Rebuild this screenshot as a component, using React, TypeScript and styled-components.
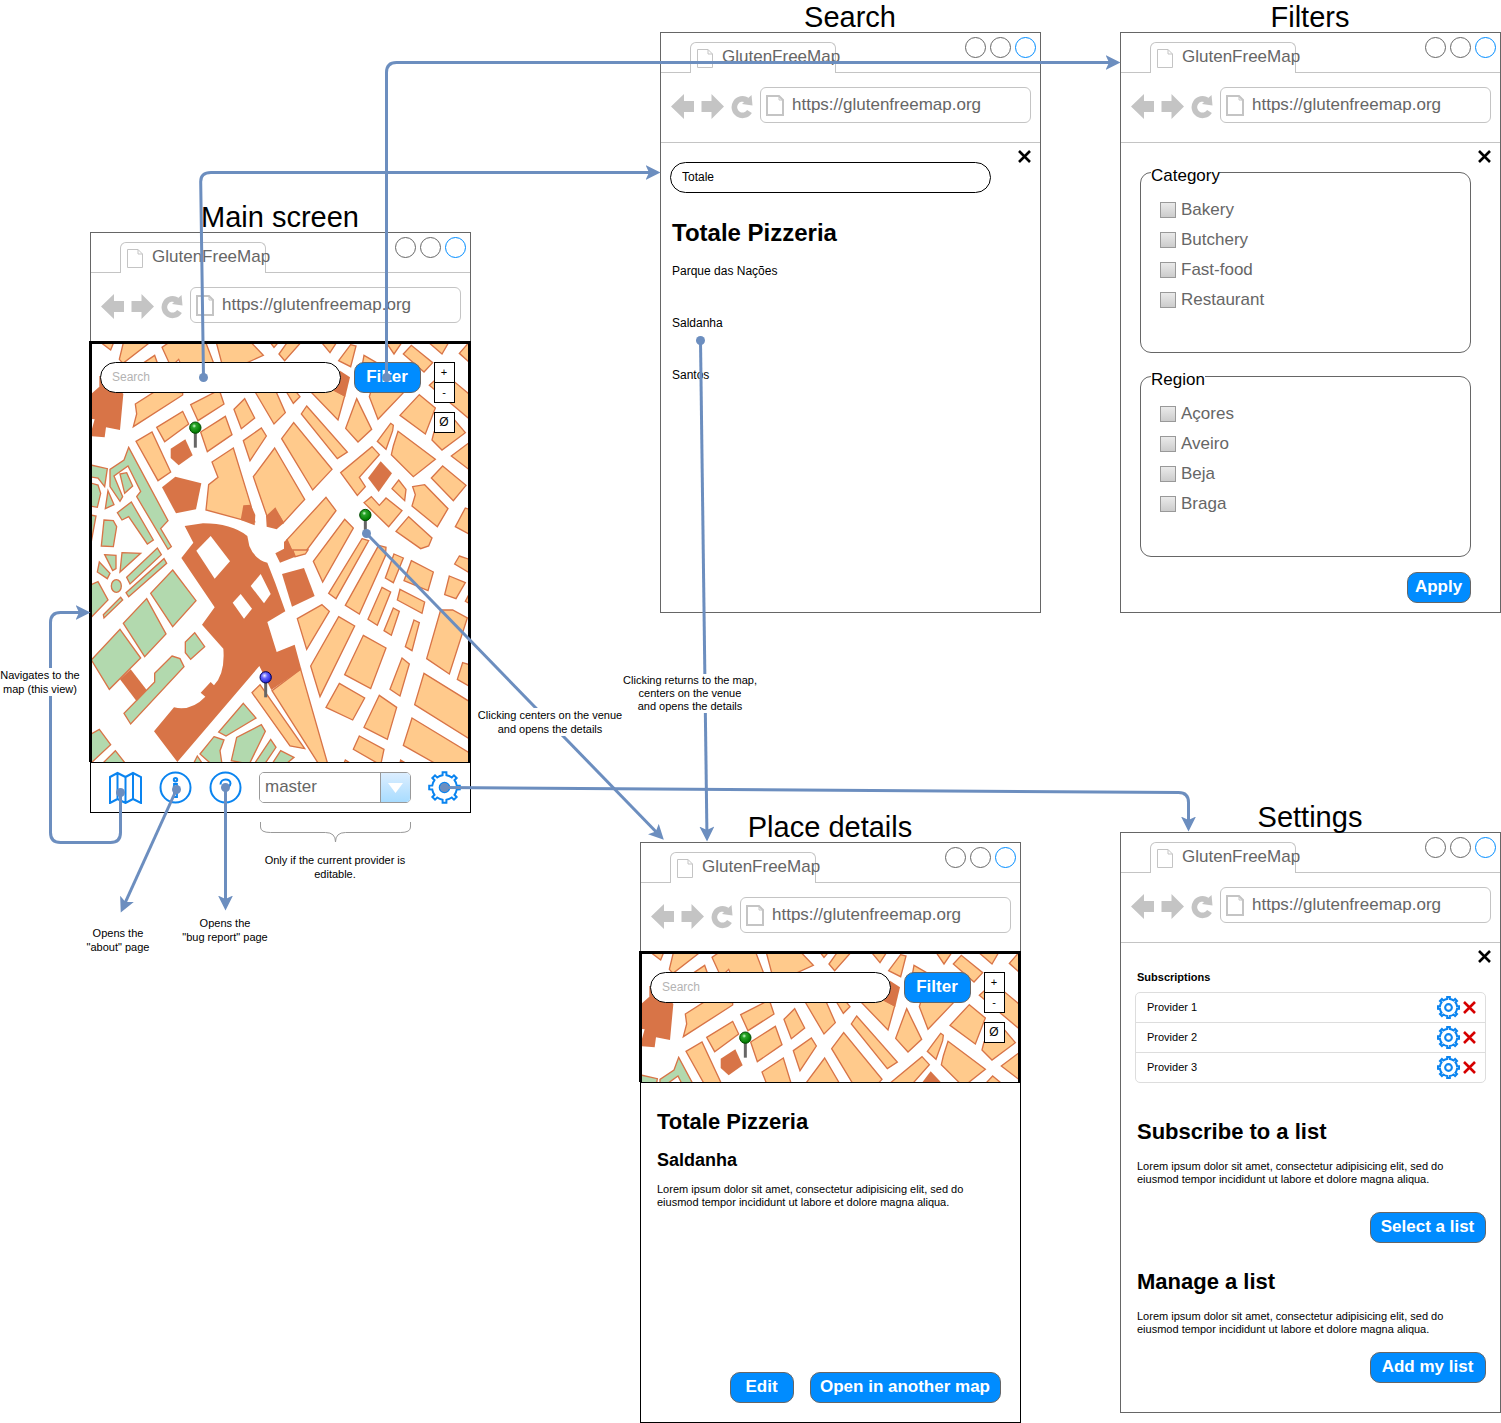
import React from "react";
import styled, { createGlobalStyle } from "styled-components";

const Global = createGlobalStyle`
  *, *::before, *::after { box-sizing: border-box; }
  body { margin: 0; background: #fff; color: #000; font-family: "Liberation Sans", Arial, sans-serif; }
  button, input, select { font-family: inherit; margin: 0; }
  h1, h2, h3, h4, p, ul { margin: 0; padding: 0; }
  ul { list-style: none; }
`;

const BLUE = "#008cff";
const ICON_BLUE = "#0a84f0";
const GREY = "#666";
const LIGHT = "#c4c4c4";
const EDGE = "#6c8ebf";

/* ---------- canvas ---------- */

const Canvas = styled.main`
  position: relative;
  min-height: 1423px;
  overflow: hidden;
`;

const Frame = styled.section<{ $x: number; $y: number }>`
  position: absolute;
  left: ${(p) => p.$x}px;
  top: ${(p) => p.$y}px;
  width: 381px;
`;

const FrameTitle = styled.h1`
  padding-right: 1px;
  font-size: 29px;
  line-height: 30px;
  font-weight: 400;
  text-align: center;
`;

const Window = styled.div`
  display: flex;
  flex-direction: column;
  min-height: 581px;
  border: 1px solid ${GREY};
`;

/* ---------- browser chrome ---------- */

const TabBar = styled.div`
  display: flex;
  justify-content: space-between;
  height: 40px;
  padding: 0 4px 0 29px;
  box-shadow: inset 0 -1px 0 ${LIGHT};
`;

const Tab = styled.div`
  display: flex;
  align-items: flex-start;
  gap: 9px;
  width: 146px;
  height: 31px;
  margin-top: 9px;
  padding: 6px 0 0 6px;
  border: 1px solid ${LIGHT};
  border-bottom: 0;
  border-radius: 6px 6px 0 0;
  background: #fff;
  color: ${GREY};
  font-size: 17px;
  line-height: 18px;
  white-space: nowrap;
`;

const TabText = styled.span`
  margin-top: -1px;
`;

const DocSvg = styled.svg`
  flex: none;
`;

const Dots = styled.div`
  display: flex;
  gap: 4px;
  padding-top: 4px;
`;

const Dot = styled.span<{ $active?: boolean }>`
  width: 21px;
  height: 21px;
  border: 1px solid ${(p) => (p.$active ? BLUE : GREY)};
  border-radius: 50%;
`;

const Toolbar = styled.div`
  display: flex;
  align-items: flex-start;
  height: 69px;
  padding: 14px 9px 0 10px;
`;

const NavButtons = styled.div`
  display: flex;
  gap: 6px;
  width: 89px;
  padding-top: 7px;
`;

const IconButton = styled.button`
  display: block;
  flex: none;
  padding: 0;
  border: 0;
  background: none;
  line-height: 0;
  cursor: pointer;
`;

const Address = styled.div`
  display: flex;
  flex: 1;
  align-items: center;
  gap: 8px;
  height: 36px;
  padding-left: 5px;
  border: 1px solid ${LIGHT};
  border-radius: 6px;
`;

const AddressInput = styled.input`
  flex: 1;
  min-width: 0;
  height: 34px;
  padding: 0;
  border: 0;
  outline: 0;
  background: none;
  color: ${GREY};
  font-size: 17px;
`;

const Body = styled.div`
  position: relative;
  flex: 1;
  border-top: 1px solid ${LIGHT};
`;

const CloseButton = styled(IconButton)`
  position: absolute;
  top: 7px;
  right: 9px;
`;

const DocIcon = ({ w, h, s }: { w: number; h: number; s: number }) => (
  <DocSvg width={w} height={h} viewBox={`0 0 ${w} ${h}`} fill="none" stroke={LIGHT} strokeWidth={s} aria-hidden="true">
    <path d={`M${s / 2} ${s / 2}H${w - 5}L${w - s / 2} 5V${h - s / 2}H${s / 2}Z`} />
    <path d={`M${w - 5} ${s / 2}V5H${w - s / 2}`} strokeWidth="1" />
  </DocSvg>
);

const Chrome = () => (
  <>
    <TabBar>
      <Tab>
        <DocIcon w={16} h={19} s={1} />
        <TabText>GlutenFreeMap</TabText>
      </Tab>
      <Dots>
        <Dot />
        <Dot />
        <Dot $active />
      </Dots>
    </TabBar>
    <Toolbar>
      <NavButtons>
        <IconButton aria-label="Back">
          <svg width="24" height="25" viewBox="0 0 24 25" fill={LIGHT}>
            <path d="M0 12.500 13 0V7H23V18H13V25Z" />
          </svg>
        </IconButton>
        <IconButton aria-label="Forward">
          <svg width="24" height="25" viewBox="0 0 24 25" fill={LIGHT}>
            <path d="M23 12.500 10.500 0V7H0.500V18H10.500V25Z" />
          </svg>
        </IconButton>
        <IconButton aria-label="Reload">
          <svg width="22" height="25" viewBox="0 0 22 25" fill="none">
            <path d="M18.500 17.500A8.200 8.200 0 1 1 16 6.200" stroke={LIGHT} strokeWidth="5.600" />
            <path d="M20.500 1 21.500 11.500 11 10Z" fill={LIGHT} />
          </svg>
        </IconButton>
      </NavButtons>
      <Address>
        <DocIcon w={18} h={21} s={2} />
        <AddressInput aria-label="Address" defaultValue="https://glutenfreemap.org" />
      </Address>
    </Toolbar>
  </>
);

const Screen = ({ x, y, title, children }: { x: number; y: number; title: string; children: React.ReactNode }) => (
  <Frame $x={x} $y={y}>
    <FrameTitle>{title}</FrameTitle>
    <Window>
      <Chrome />
      {children}
    </Window>
  </Frame>
);

/* ---------- shared controls ---------- */

const Button = styled.button<{ $w: number }>`
  flex: none;
  width: ${(p) => p.$w}px;
  height: 31px;
  padding: 0 1px 2px 0;
  border: 1px solid ${GREY};
  border-radius: 10px;
  background: ${BLUE};
  color: #fff;
  font-size: 17px;
  font-weight: 700;
  line-height: 20px;
  white-space: nowrap;
  cursor: pointer;
`;

const SearchInput = styled.input<{ $w: number }>`
  width: ${(p) => p.$w}px;
  height: 31px;
  padding: 0 11px 1px;
  border: 1px solid #000;
  border-radius: 16px;
  background: #fff;
  color: #000;
  font-size: 12px;
  outline: 0;
  &::placeholder { color: #b3b3b3; opacity: 1; }
`;

const Cross = ({ color = "#000" }: { color?: string }) => (
  <svg width="13" height="13" viewBox="0 0 13 13" stroke={color} strokeWidth="2.600" aria-hidden="true">
    <path d="M1 1 12 12M12 1 1 12" />
  </svg>
);

const gearPath = () => {
  const steps: string[] = [];
  const point = (r: number, deg: number) => {
    const a = (deg * Math.PI) / 180;
    return `${(16.5 + r * Math.cos(a)).toFixed(2)} ${(16.5 + r * Math.sin(a)).toFixed(2)}`;
  };
  for (let i = 0; i < 8; i++) {
    const c = i * 45;
    steps.push(`${i ? "L" : "M"}${point(12.4, c - 9)}L${point(15.4, c - 7)}L${point(15.4, c + 7)}L${point(12.4, c + 9)}`);
    steps.push(`A12.4 12.4 0 0 1 ${point(12.4, c + 36)}`);
  }
  return steps.join("") + "Z";
};
const GEAR = gearPath();

const Gear = ({ size, stroke = 2 }: { size: number; stroke?: number }) => (
  <svg width={size} height={size} viewBox="0 0 33 33" fill="none" stroke={ICON_BLUE} strokeWidth={stroke} aria-hidden="true">
    <path d={GEAR} />
    <circle cx="16.500" cy="16.500" r="4.800" />
  </svg>
);

/* ---------- map ---------- */

const ORANGE_BLOCKS = [
  "35,5 78,5 68,30", "108,0 190,4 105,70 94,58", "150,80 200,46 212,80",
  "242,8 222,22 245,72 262,68 272,58 278,72 378,72 352,4", "384,4 402,72 468,72 526,46 486,4",
  "544,4 558,22 574,4", "573,42 590,62 640,6 600,4", "142,192 200,155 284,158 284,165 136,260 146,222",
  "308,194 394,150 408,192 330,242", "206,262 284,214 302,252 230,305", "338,276 412,229 432,284 358,335",
  "144,304 192,276 248,396 210,422", "438,208 470,176 500,234 460,266", "466,302 520,264 535,288 486,362",
  "498,150 562,150 592,218 558,252", "581,296 617,248 732,388 674,450",
  "372,366 436,324 488,494 500,545 458,538 354,510 362,434 390,412", "560,324 650,478 584,550 562,540 536,526 496,410",
  "698,4 748,4 726,38", "752,62 788,14 804,18 788,80", "892,4 944,4 918,42", "946,42 970,16 1034,68 1008,96",
  "1018,4 1084,4 1062,42", "1114,40 1144,6 1150,72", "820,90 828,46 866,68 866,100", "592,150 620,150 636,170 616,190",
  "671,158 736,148 770,168 750,240", "806,176 851,268 810,306 773,265", "844,170 850,150 952,152 870,238",
  "656,198 778,336 748,356 640,222", "994,164 1042,204 1012,282 936,226", "1024,136 1046,116 1100,126 1150,168 1150,242",
  "1032,300 1038,276 1100,240 1132,278 1062,330", "908,250 916,256 914,272 894,328 868,304",
  "930,274 1042,358 976,410 910,344 916,318", "1150,303 1090,348 1150,394", "852,320 874,344 814,412 832,440 808,466 758,398",
  "932,420 954,448 950,482 912,446", "974,440 1010,434 1080,506 1048,560 972,498 982,464", "1064,378 1134,436 1096,482 1030,414",
  "1150,510 1132,504 1102,560 1150,586", "828,488 850,470 874,496 894,474 942,512 902,560",
  "962,530 1032,594 1022,618 998,626 924,574", "714,472 744,512 652,636 620,650 596,600", "770,538 796,564 704,726 676,664",
  "822,596 842,602 744,776 722,760", "872,616 894,622 892,648 814,822 772,796", "918,642 946,654 916,728 892,714",
  "970,662 1036,696 1020,752 948,722", "936,748 1010,786 1002,820 928,780", "882,742 908,756 868,856 840,838",
  "916,804 934,814 910,886 888,872", "978,840 994,848 972,932 952,920", "1058,810 1094,810 1138,834 1084,1002 1016,956",
  "1084,708 1132,728 1104,776 1070,764", "1114,648 1150,660 1150,702 1100,672", "1150,750 1132,784 1150,794",
  "1124,968 1150,976 1150,1042 1108,1018", "1008,1000 1150,1088 1150,1200 980,1094", "972,1134 1150,1242 1150,1275 1050,1275 946,1216",
  "942,954 964,972 936,1068 906,1048", "826,886 894,924 848,1046 770,1004", "752,830 800,858 696,1070 668,978",
  "702,794 724,814 656,928 628,836", "754,1030 830,1074 794,1140 714,1102", "874,1066 926,1102 898,1198 828,1162",
  "814,1188 888,1228 878,1275 796,1228", "768,1270 772,1260 788,1270", "936,1270 938,1260 954,1270",
  "638,988 720,1275 694,1275 552,1052", "516,1034 650,1226 606,1218 492,1058", "614,630 660,630 652,642 622,650",
];

const DARK_BLOCKS = [
  "12,160 34,140 34,108 60,108 106,162 96,270 54,262 50,292 6,288 20,238 6,236", "222,442 262,410 340,430 324,508 264,520",
  "248,326 292,298 314,346 272,376 248,354", "466,496 488,494 502,525 500,556 458,540", "534,528 562,502 588,548 566,568 536,560",
  "756,92 786,112 772,170 736,152", "878,364 912,400 872,456 840,414", "582,702 648,684 680,768 612,800",
  "588,606 598,596 622,650 576,668 562,640 588,626", "128,988 176,1050 146,1084 96,1018", "566,520 576,528 588,548 570,560",
];

const GREEN_BLOCKS = [
  "122,322 240,542 218,566 250,620 240,628 146,470 158,454 120,378 78,408 104,470 96,484 66,440 66,388 108,360",
  "96,402 116,398 134,438 110,460", "4,374 58,386 50,440 30,414 4,410", "4,428 30,435 38,460 28,502 4,498", "60,452 78,494 52,506",
  "88,518 130,486 196,600 178,612 122,530 102,540", "48,540 76,542 86,560 76,620 40,618", "4,524 24,528 10,604",
  "50,644 84,646 84,686 74,692", "102,638 158,640 96,696", "34,666 66,700 58,716 28,696", "4,736 30,725 60,780 4,838",
  "46,824 98,772 104,780 48,834", "116,712 208,624 220,644 126,732", "114,758 228,656 236,670 122,770",
  "254,690 324,782 254,860 188,760", "176,776 234,882 170,950 106,850", "96,868 158,954 64,1048 10,960",
  "320,878 350,920 308,958 292,938 292,906", "252,948 276,956 288,980 128,1152 108,1120 200,1026 200,1000",
  "34,1168 68,1214 6,1272 6,1184", "82,1232 112,1270 44,1270", "466,1090 504,1134 414,1188 392,1176",
  "520,1154 532,1174 484,1272 430,1262 446,1192", "378,1190 408,1200 396,1232 402,1272 370,1272 336,1242",
  "548,1198 564,1222 530,1272 500,1270", "578,1232 618,1252 594,1272 552,1272", "328,1248 344,1272 316,1272",
];

const MapArea = styled.div<{ $h: number }>`
  position: relative;
  height: ${(p) => p.$h}px;
  margin: -1px -1px 0 -2px;
  padding: 18px 8px;
  border: 3px solid #000;
  border-bottom: 0;
  overflow: hidden;
`;

const MapDrawing = styled.svg`
  position: absolute;
  top: 0;
  left: 0;
`;

const MapControls = styled.div`
  position: relative;
  display: flex;
  align-items: flex-start;
  gap: 13px;
`;

const ZoomStack = styled.div`
  display: flex;
  flex-direction: column;
`;

const SquareButton = styled.button<{ $gap?: boolean; $joined?: boolean }>`
  width: 21px;
  height: 21px;
  margin-top: ${(p) => (p.$gap ? 9 : p.$joined ? -1 : 0)}px;
  padding: 0 1px 2px 0;
  border: 1px solid #000;
  background: #fff;
  color: #000;
  font-size: ${(p) => (p.$gap ? 12 : 11)}px;
  line-height: 14px;
  cursor: pointer;
`;

const Pin = ({ x, y, kind }: { x: number; y: number; kind: "green" | "blue" }) => (
  <g>
    <path d={`M${x} ${y + 10}V${y + 60}`} stroke={GREY} strokeWidth="9" />
    <circle cx={x} cy={y} r="17" fill={`url(#pin-${kind})`} stroke={kind === "green" ? "#004a00" : "#000050"} strokeWidth="3" />
  </g>
);

const CityMap = ({ height, pins }: { height: number; pins: React.ReactNode }) => (
  <MapArea $h={height}>
    <MapDrawing width="380" height="420" viewBox="12 12 1140 1260" role="img" aria-label="City map">
      <defs>
        <radialGradient id="pin-green" cx="0.4" cy="0.35" r="0.6">
          <stop offset="0" stopColor="#d8ffd8" />
          <stop offset="0.3" stopColor="#2aa52a" />
          <stop offset="1" stopColor="#007a00" />
        </radialGradient>
        <radialGradient id="pin-blue" cx="0.4" cy="0.35" r="0.6">
          <stop offset="0" stopColor="#f0f0ff" />
          <stop offset="0.4" stopColor="#6a6aff" />
          <stop offset="1" stopColor="#2828d8" />
        </radialGradient>
      </defs>
      <g stroke="#d87447" strokeWidth="4">
        <g fill="#ffca8c">{ORANGE_BLOCKS.map((p) => <polygon key={p} points={p} />)}</g>
        <g fill="#b2d9ae">
          {GREEN_BLOCKS.map((p) => <polygon key={p} points={p} />)}
          <ellipse cx="85" cy="738" rx="15" ry="19" />
        </g>
      </g>
      <g fill="#d87447">
        {DARK_BLOCKS.map((p) => <polygon key={p} points={p} />)}
        <path d="M290 558 345 550Q430 550 478 588L484 618Q500 658 538 668L562 730 592 814 538 846 566 936 620 914 640 988 550 1050 514 978 268 1266 198 1174 258 1102Q310 1114 352 1070L338 1058 368 1026 378 1036Q412 1000 406 926L342 854 380 802 280 654 316 608Z" />
      </g>
      <g fill="#fff">
        <polygon points="368,588 426,664 380,716 325,632" />
        <polygon points="518,702 548,762 528,790 488,738" />
        <polygon points="458,762 492,806 468,836 434,788" />
      </g>
      {pins}
    </MapDrawing>
    <MapControls>
      <SearchInput $w={241} type="search" placeholder="Search" aria-label="Search" />
      <Button $w={67}>Filter</Button>
      <ZoomStack>
        <SquareButton>+</SquareButton>
        <SquareButton $joined>-</SquareButton>
        <SquareButton $gap>Ø</SquareButton>
      </ZoomStack>
    </MapControls>
  </MapArea>
);

/* ---------- main screen ---------- */

const BottomBar = styled.nav`
  display: flex;
  align-items: center;
  gap: 17px;
  height: 51px;
  margin: 0 -1px -1px;
  padding: 0 9px 0 18px;
  border: 1px solid #000;
`;

const SelectBox = styled.div`
  display: grid;
  grid-template-columns: 1fr 30px;
  width: 152px;
  height: 31px;
  border: 1px solid #999;
  border-radius: 5px;
  overflow: hidden;
`;

const Select = styled.select`
  grid-area: 1 / 1 / 2 / 3;
  appearance: none;
  padding: 0 0 2px 5px;
  border: 0;
  background: #fff;
  color: ${GREY};
  font-size: 17px;
  outline: 0;
`;

const SelectArrow = styled.span`
  grid-area: 1 / 2 / 2 / 3;
  display: grid;
  place-items: center;
  border-left: 1px solid #999;
  background: linear-gradient(#dceeff, #a8dcff);
  pointer-events: none;
`;

const IconSvg = ({ children }: { children: React.ReactNode }) => (
  <svg width="33" height="33" viewBox="0 0 33 33" fill="none" stroke={ICON_BLUE} strokeWidth="2" aria-hidden="true">
    {children}
  </svg>
);

const MainScreen = () => (
  <Screen x={90} y={202} title="Main screen">
    <CityMap
      height={421}
      pins={
        <>
          <Pin x={322} y={263} kind="green" />
          <Pin x={832} y={525} kind="green" />
          <Pin x={533} y={1012} kind="blue" />
        </>
      }
    />
    <BottomBar>
      <IconButton aria-label="Map">
        <IconSvg>
          <path d="M1 6 8.500 2 16.500 6 24 2 32 6V32L24 28 16.500 32 8.500 28 1 32ZM8.500 2V28M16.500 6V32M24 2V28" />
        </IconSvg>
      </IconButton>
      <IconButton aria-label="About">
        <IconSvg>
          <circle cx="16.500" cy="16.500" r="15" />
          <circle cx="16.500" cy="8.800" r="1.700" />
          <path d="M15 13H18V26H15Z" strokeWidth="1.800" />
        </IconSvg>
      </IconButton>
      <IconButton aria-label="Bug report">
        <IconSvg>
          <circle cx="16.500" cy="16.500" r="15" />
          <path d="M11.500 13.500C11.500 7 21.500 7 21.500 12.500C21.500 16 17 16.500 16.500 20" />
        </IconSvg>
      </IconButton>
      <SelectBox>
        <Select aria-label="Branch" defaultValue="master">
          <option>master</option>
        </Select>
        <SelectArrow>
          <svg width="15" height="10" viewBox="0 0 15 10" fill="#fff" aria-hidden="true">
            <path d="M0 0H15L7.500 10Z" />
          </svg>
        </SelectArrow>
      </SelectBox>
      <IconButton aria-label="Settings">
        <Gear size={33} />
      </IconButton>
    </BottomBar>
  </Screen>
);

/* ---------- search ---------- */

const SearchBody = styled(Body)`
  padding: 19px 10px 0 9px;
`;

const Heading = styled.h2<{ $size: number; $top: number }>`
  margin-top: ${(p) => p.$top}px;
  padding-left: 2px;
  font-size: ${(p) => p.$size}px;
  line-height: 26px;
  font-weight: 700;
`;

const Venues = styled.ul`
  display: flex;
  flex-direction: column;
  gap: 36px;
  padding: 17px 0 0 2px;
  font-size: 12px;
  line-height: 16px;
`;

const SearchScreen = () => (
  <Screen x={660} y={2} title="Search">
    <SearchBody>
      <CloseButton aria-label="Close"><Cross /></CloseButton>
      <SearchInput $w={321} defaultValue="Totale" aria-label="Search" />
      <Heading $size={24} $top={27}>Totale Pizzeria</Heading>
      <Venues>
        <li>Parque das Nações</li>
        <li>Saldanha</li>
        <li>Santos</li>
      </Venues>
    </SearchBody>
  </Screen>
);

/* ---------- filters ---------- */

const FiltersBody = styled(Body)`
  display: flex;
  flex-direction: column;
  gap: 10px;
  padding: 16px 29px 9px 19px;
`;

const Group = styled.fieldset`
  display: flex;
  flex-direction: column;
  gap: 10px;
  min-width: 0;
  margin: 0;
  padding: 15px 10px 42px;
  border: 1px solid ${GREY};
  border-radius: 11px;
`;

const Legend = styled.legend`
  padding: 7px 0 0;
  font-size: 17px;
  line-height: 19px;
`;

const Option = styled.label`
  display: flex;
  align-items: center;
  gap: 5px;
  padding-left: 9px;
  color: ${GREY};
  font-size: 17px;
  line-height: 20px;
`;

const Checkbox = styled.input`
  appearance: none;
  width: 16px;
  height: 16px;
  margin: 0;
  border: 1px solid #999;
  background: linear-gradient(#eaeaea, #cccccc);
`;

const Actions = styled.div<{ $top: number }>`
  display: flex;
  justify-content: flex-end;
  gap: 16px;
  margin-top: ${(p) => p.$top}px;
`;

const FilterGroup = ({ name, options }: { name: string; options: string[] }) => (
  <Group>
    <Legend>{name}</Legend>
    {options.map((o) => (
      <Option key={o}>
        <Checkbox type="checkbox" />
        {o}
      </Option>
    ))}
  </Group>
);

const FiltersScreen = () => (
  <Screen x={1120} y={2} title="Filters">
    <FiltersBody>
      <CloseButton aria-label="Close"><Cross /></CloseButton>
      <FilterGroup name="Category" options={["Bakery", "Butchery", "Fast-food", "Restaurant"]} />
      <FilterGroup name="Region" options={["Açores", "Aveiro", "Beja", "Braga"]} />
      <Actions $top={5}>
        <Button $w={64}>Apply</Button>
      </Actions>
    </FiltersBody>
  </Screen>
);

/* ---------- place details ---------- */

const PlacePanel = styled.div`
  display: flex;
  flex: 1;
  flex-direction: column;
  margin: 0 -1px -1px;
  padding: 0 19px 19px 14px;
  border: 1px solid #000;
`;

const SubHeading = styled.h3`
  margin-top: 15px;
  padding-left: 2px;
  font-size: 18px;
  line-height: 20px;
`;

const Copy = styled.p<{ $top: number }>`
  max-width: 330px;
  margin-top: ${(p) => p.$top}px;
  padding-left: 2px;
  font-size: 11px;
  line-height: 13px;
`;

const PanelFooter = styled.div`
  display: flex;
  justify-content: flex-end;
  gap: 16px;
  margin-top: auto;
`;

const LOREM =
  "Lorem ipsum dolor sit amet, consectetur adipisicing elit, sed do eiusmod tempor incididunt ut labore et dolore magna aliqua.";

const PlaceScreen = () => (
  <Screen x={640} y={812} title="Place details">
    <CityMap height={131} pins={<Pin x={322} y={263} kind="green" />} />
    <PlacePanel>
      <Heading $size={22} $top={26}>Totale Pizzeria</Heading>
      <SubHeading>Saldanha</SubHeading>
      <Copy $top={13}>{LOREM}</Copy>
      <PanelFooter>
        <Button $w={64}>Edit</Button>
        <Button $w={191}>Open in another map</Button>
      </PanelFooter>
    </PlacePanel>
  </Screen>
);

/* ---------- settings ---------- */

const SettingsBody = styled(Body)`
  padding: 27px 14px 0;
`;

const ListTitle = styled.h4`
  margin-bottom: 8px;
  padding-left: 2px;
  font-size: 11px;
  line-height: 14px;
`;

const Providers = styled.ul`
  border: 1px solid #ddd;
  border-radius: 5px;
`;

const Provider = styled.li`
  display: flex;
  align-items: center;
  gap: 3px;
  height: 30px;
  padding: 0 9px 1px 11px;
  font-size: 11px;
  & + & { border-top: 1px solid #ddd; }
  &:first-child { height: 29px; }
`;

const ProviderName = styled.span`
  flex: 1;
`;

const SettingsScreen = () => (
  <Screen x={1120} y={802} title="Settings">
    <SettingsBody>
      <CloseButton aria-label="Close"><Cross /></CloseButton>
      <ListTitle>Subscriptions</ListTitle>
      <Providers>
        {["Provider 1", "Provider 2", "Provider 3"].map((name) => (
          <Provider key={name}>
            <ProviderName>{name}</ProviderName>
            <IconButton aria-label={`Configure ${name}`}><Gear size={23} stroke={3} /></IconButton>
            <IconButton aria-label={`Remove ${name}`}><Cross color="#d60000" /></IconButton>
          </Provider>
        ))}
      </Providers>
      <Heading $size={22} $top={36}>Subscribe to a list</Heading>
      <Copy $top={15}>{LOREM}</Copy>
      <Actions $top={26}>
        <Button $w={116}>Select a list</Button>
      </Actions>
      <Heading $size={22} $top={26}>Manage a list</Heading>
      <Copy $top={15}>{LOREM}</Copy>
      <Actions $top={16}>
        <Button $w={116}>Add my list</Button>
      </Actions>
    </SettingsBody>
  </Screen>
);

/* ---------- connectors and notes ---------- */

const Connectors = styled.svg`
  position: absolute;
  inset: 0;
  width: 100%;
  height: 100%;
  pointer-events: none;
`;

const Note = styled.p<{ $x: number; $y: number; $lh?: number }>`
  position: absolute;
  left: ${(p) => p.$x}px;
  top: ${(p) => p.$y}px;
  transform: translateX(-50%);
  background: #fff;
  font-size: 11px;
  line-height: ${(p) => p.$lh ?? 14}px;
  text-align: center;
  white-space: pre;
`;

const EDGES: { from: [number, number]; path: string }[] = [
  { from: [203.5, 377.5], path: "M203.500 377.500 200.700 182Q200.500 172.500 211 172.500H650" },
  { from: [386.5, 377.5], path: "M386.500 377.500V72.500Q386.500 62.500 396.500 62.500H1110" },
  { from: [366.5, 533.5], path: "M366.500 533.500 656.500 832.300" },
  { from: [700.5, 340.5], path: "M700.500 340.500 706.900 831" },
  { from: [120.5, 792.5], path: "M120.500 792.500V832.500Q120.500 842.500 110.500 842.500H60.500Q50.500 842.500 50.500 832.500V622.500Q50.500 612.500 60.500 612.500H80" },
  { from: [176.5, 789.5], path: "M176.500 789.500 125.100 902.900" },
  { from: [225.5, 787.5], path: "M225.500 787.500V900" },
  { from: [444.5, 787.5], path: "M444.500 787.500 1178.500 792.500Q1188.500 792.500 1188.500 802.500V821" },
];

export default function App() {
  return (
    <>
      <Global />
      <Canvas>
        <MainScreen />
        <SearchScreen />
        <FiltersScreen />
        <PlaceScreen />
        <SettingsScreen />
        <Connectors aria-hidden="true">
          <defs>
            <marker id="arrow" markerUnits="userSpaceOnUse" markerWidth="16" markerHeight="16" refX="4.500" refY="7.500" orient="auto">
              <path d="M15 7.500 0 0 3.500 7.500 0 15Z" fill={EDGE} />
            </marker>
          </defs>
          {EDGES.map((e) => (
            <g key={e.path}>
              <path d={e.path} fill="none" stroke={EDGE} strokeWidth="3" markerEnd="url(#arrow)" />
              <circle cx={e.from[0]} cy={e.from[1]} r="4.500" fill={EDGE} />
            </g>
          ))}
          <path
            d="M260.500 822V827Q260.500 832.500 270.500 832.500H325.500Q335.500 832.500 335.500 842Q335.500 832.500 345.500 832.500H400.500Q410.500 832.500 410.500 827V822"
            fill="none"
            stroke="#999"
          />
        </Connectors>
        <Note $x={40} $y={668}>{"Navigates to the\nmap (this view)"}</Note>
        <Note $x={550} $y={708}>{"Clicking centers on the venue\nand opens the details"}</Note>
        <Note $x={690} $y={674} $lh={13}>{"Clicking returns to the map,\ncenters on the venue\nand opens the details"}</Note>
        <Note $x={118} $y={926}>{"Opens the\n\"about\" page"}</Note>
        <Note $x={225} $y={916}>{"Opens the\n\"bug report\" page"}</Note>
        <Note $x={335} $y={853}>{"Only if the current provider is\neditable."}</Note>
      </Canvas>
    </>
  );
}
